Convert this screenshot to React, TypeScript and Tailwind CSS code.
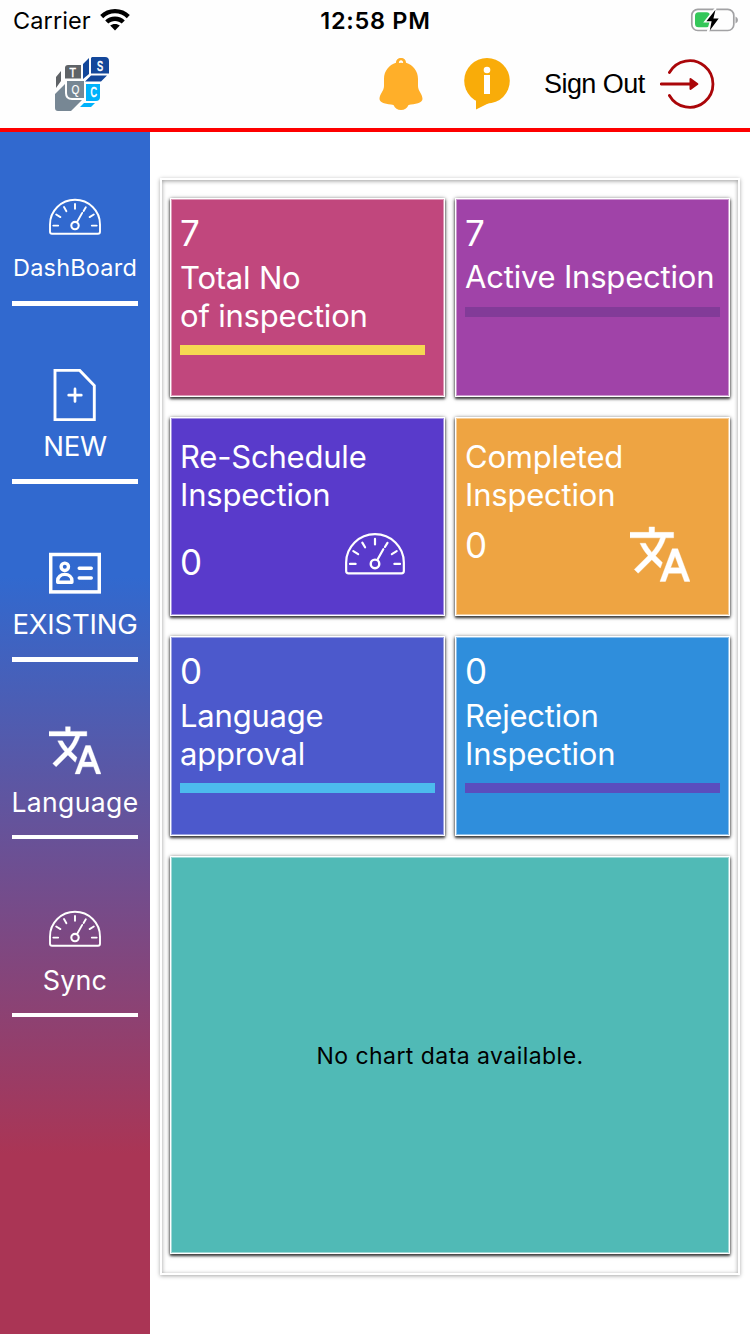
import React from "react";

type P = { className?: string };

function Gauge({ className }: P) {
  return (
    <svg viewBox="0 0 52 52" className={className} fill="none" stroke="white" strokeWidth="1.9" strokeLinecap="round">
      <path d="M1 40.8V33.4A25 24.6 0 0 1 51 33.4V40.8Q51 42.8 49 42.8H3Q1 42.8 1 40.8Z" />
      <path d="M4.3 34.6H9.2M42.8 34.6H47.7M7.2 23.5L11.4 26.1M44.8 23.5L40.6 26.1M15 16.1L17.4 20.2M26 12.9V17.7M36.8 16.3L34.6 19.9M33.2 21.9L28.2 30.7" />
      <circle cx="26" cy="34.6" r="3.7" strokeWidth="2.1" />
    </svg>
  );
}

function NewFile({ className }: P) {
  return (
    <svg viewBox="0 0 52 52" className={className} fill="none" stroke="white" strokeWidth="2.9">
      <path d="M6 1.4H30.7L45.3 16.6V50.6H6Z" />
      <path d="M26 19.9V32.5M19.7 26.2H32.3" strokeWidth="2.7" strokeLinecap="round" />
    </svg>
  );
}

function IdCard({ className }: P) {
  return (
    <svg viewBox="0 0 52 52" className={className} fill="none" stroke="white" strokeWidth="3.4">
      <rect x="1.7" y="7.5" width="48.6" height="37.4" strokeWidth="3.5" />
      <circle cx="15.8" cy="19.8" r="3.7" />
      <path d="M8.7 35.3V33.6C8.7 30 11.5 27.4 15.8 27.4S22.9 30 22.9 33.6V35.3Z" strokeLinejoin="round" />
      <path d="M30.2 21.2H42.3M30.2 31H42.3" strokeLinecap="round" />
    </svg>
  );
}

function Translate({ className }: P) {
  return (
    <svg viewBox="1 1.3 22 22" className={className} fill="white" stroke="white" strokeWidth="0.15">
      <path d="M12.87 15.07l-2.54-2.51.03-.03c1.74-1.94 2.98-4.17 3.71-6.53H17V4h-7V2H8v2H1v1.99h11.17C11.5 7.92 10.44 9.75 9 11.35 8.07 10.32 7.3 9.19 6.69 8h-2c.73 1.63 1.73 3.17 2.98 4.56l-5.09 5.02L4 19l5-5 3.11 3.11.76-2.04zM18.5 10h-2L12 22h2l1.12-3h4.75L21 22h2l-4.5-12zm-2.62 7l1.62-4.33L19.12 17h-3.24z" />
    </svg>
  );
}

function Logo() {
  return (
    <svg viewBox="0 0 56 56" className="mt-px h-14 w-14 overflow-visible" fontFamily="Liberation Sans, sans-serif" fill="white" fontWeight="400" stroke="white" textAnchor="middle">
      <g stroke="none">
        <path fill="#5f6367" d="M2 20L7 14V24L2 31ZM14 8H27V21.5H11V11Q11 8 14 8Z" />
        <path fill="#13479a" d="M29 7L35 1V17L29 22ZM38 0H51Q55 0 55 4V16.5H37V1ZM37 18.5H53L47 24.5H31Z" />
        <path fill="#778794" d="M1 37L11 27V36Q11 43 18 43H28L17 54H4Q1 54 1 51ZM13 24H30V41H18Q13 41 13 36Z" />
        <path fill="#00b2fb" d="M32 27H46V40Q46 44 42 44H32ZM30 46H41L37 50H26Z" />
      </g>
      <text transform="translate(18.7 19.7) scale(.78 1)" fontSize="13.5" strokeWidth=".5">T</text>
      <text transform="translate(46 14) scale(.65 1)" fontSize="14" strokeWidth=".7">S</text>
      <text transform="translate(21.4 36.6) scale(.75 1)" fontSize="13.5" strokeWidth=".2">Q</text>
      <text transform="translate(39.7 40.4) scale(.62 1)" fontSize="14.5" strokeWidth=".6">C</text>
    </svg>
  );
}

function StatusBar() {
  return (
    <div className="grid h-10 grid-cols-3 items-center pl-[13px] pr-3 text-[23.5px] leading-none text-black">
      <div className="flex items-center gap-[9px] pt-px">
        <span className="tracking-[0.1px]">Carrier</span>
        <svg viewBox="0 0 30 22" className="-mt-px h-[22px] w-[30px]" fill="black">
          <path d="M15 0C21 0 26 2.3 29.8 6L26.8 9.2C23.5 6 19.5 4.3 15 4.3S6.5 6 3.2 9.2L.2 6C4 2.3 9 0 15 0Z" />
          <path d="M15 7.6C19 7.6 22.3 9.1 24.8 11.4L21.7 14.5C19.9 12.8 17.6 11.9 15 11.9S10.1 12.8 8.3 14.5L5.2 11.4C7.7 9.1 11 7.6 15 7.6Z" />
          <path d="M15 15C17 15 18.6 15.6 19.8 16.6L15 21.6L10.2 16.6C11.4 15.6 13 15 15 15Z" />
        </svg>
      </div>
      <span className="justify-self-center whitespace-nowrap pt-0.5 font-semibold tracking-[0.7px]">12:58 PM</span>
      <svg viewBox="0 0 48 24" className="h-6 w-12 justify-self-end">
        <rect x="1.8" y="1.3" width="42" height="21.2" rx="6" fill="none" stroke="#a2a2a4" strokeWidth="1.7" />
        <path d="M45.5 8.5Q48 9.5 48 12T45.5 15.5Z" fill="#a2a2a4" />
        <rect x="5" y="4.3" width="15" height="15" rx="3.5" fill="#34c759" />
        <path d="M25.6 0L14.8 13.7H20.4L17.5 24L30.2 9.5H24.8Z" fill="white" stroke="white" strokeWidth="1.5" />
        <path d="M25.5 1.8L16.4 13.3H21.6L19.8 22.5L28.7 10.5H23.4Z" fill="black" />
      </svg>
    </div>
  );
}

function Header() {
  return (
    <header className="h-[132px] border-b-4 border-[#fe0000] bg-[#fefefe]">
      <StatusBar />
      <div className="flex items-start pl-[54px] pt-4">
        <Logo />
        <svg viewBox="0 0 44 54" className="ml-[269px] mt-px h-[54px] w-11" fill="#ffaf29">
          <path fillRule="evenodd" d="M22 1C25 1 27 3 27 5.8C34 8 39 14 39 22V29C39 34 43.5 37 43.5 42C43.5 46 36 47 29.5 48C28 51.5 25.5 53 22 53S16 51.5 14.5 48C8 47 .5 46 .5 42C.5 37 5 34 5 29V22C5 14 10 8 17 5.8C17 3 19 1 22 1ZM22 3.2A2.3 2.2 0 0 0 20 6.1Q22 5.6 24 6.1A2.3 2.2 0 0 0 22 3.2Z" />
        </svg>
        <svg viewBox="0 0 46 54" className="ml-[41px] mt-px h-[54px] w-[46px]">
          <circle cx="23" cy="23.8" r="22.8" fill="#f9ac09" />
          <path fill="#f9ac09" d="M12 42V52.6L25 46Z" />
          <circle cx="23" cy="13" r="3.3" fill="white" />
          <path d="M20 18H26V37H20Z" fill="white" />
        </svg>
        <span className="ml-[34px] mt-3.5 w-[101px] whitespace-nowrap font-['Liberation_Sans',sans-serif] text-[27px] leading-[28px] tracking-[-0.55px] text-black">Sign Out</span>
        <svg viewBox="0 0 56 52" className="ml-[15px] mt-0.5 h-[52px] w-14" fill="none" stroke="#aa0609" strokeWidth="2.8" strokeLinecap="round">
          <path d="M9.4 14.5A23.3 23.3 0 1 1 9.4 37.5M1.3 26H32" />
          <path d="M30.5 21.1L37.4 26L30.5 30.9Z" fill="#aa0609" strokeWidth="2" strokeLinejoin="round" />
        </svg>
      </div>
    </header>
  );
}

function NavItem({ icon, label, text, bar = "h-[5px]" }: { icon: React.ReactNode; label: string; text: string; bar?: string }) {
  return (
    <div className="flex h-[178px] flex-col items-center pt-[63px]">
      {icon}
      <span className={`mt-[7px] flex h-9 items-center whitespace-nowrap leading-none ${text}`}>{label}</span>
      <div className={`mt-[15px] w-[126px] bg-white ${bar}`} />
    </div>
  );
}

function Sidebar() {
  const s = "h-[52px] w-[52px] shrink-0";
  return (
    <nav className="w-[150px] shrink-0 bg-linear-to-b/srgb from-[#3169cf] from-[37%] to-[#aa3555] to-[85%] text-white">
      <div className="-mt-1">
        <NavItem icon={<Gauge className={s} />} label="DashBoard" text="text-[23.5px] tracking-[0.2px]" />
        <NavItem icon={<NewFile className={s} />} label="NEW" text="pt-0.5 text-[27.5px] tracking-[-0.2px]" />
        <NavItem icon={<IdCard className={s} />} label="EXISTING" text="pt-0.5 text-[27.5px] tracking-[-0.2px]" />
        <NavItem icon={<Translate className={s} />} label="Language" text="text-[26.5px] tracking-[0.4px]" bar="h-1" />
        <NavItem icon={<Gauge className={s} />} label="Sync" text="text-[27px] tracking-[0.1px]" bar="h-1" />
      </div>
    </nav>
  );
}

const cardFrame = "border border-white shadow-[0_1px_4px_rgba(0,0,0,0.75),0_2px_2px_rgba(0,0,0,0.5),inset_0_0_0_1px_rgba(255,255,255,0.45)]";

function Count({ value, className }: { value: string; className?: string }) {
  return <div className={`text-[35px] leading-[38px] tracking-[-0.5px] ${className ?? ""}`}>{value}</div>;
}

function Label({ children, className }: { children: React.ReactNode; className: string }) {
  return <p className={`whitespace-nowrap tracking-[-0.2px] ${className}`}>{children}</p>;
}

function Card({ bg, children }: { bg: string; children: React.ReactNode }) {
  return <section className={`px-[9px] text-[31px] leading-[38px] text-white ${cardFrame} ${bg}`}>{children}</section>;
}

export default function App() {
  return (
    <div className="flex h-[1334px] w-[750px] flex-col overflow-hidden bg-white font-['Inter',sans-serif]">
      <Header />
      <div className="flex flex-1">
        <Sidebar />
        <main className="flex-1 px-2.5 pt-[46px]">
          <div className="h-[1097px] border-2 border-white px-2 pt-[18px] shadow-[0_1px_4px_rgba(0,0,0,0.35),inset_0_1px_4px_rgba(0,0,0,0.4)]">
            <div className="grid grid-cols-2 grid-rows-[199px_199px_200px_398px] gap-x-2.5 gap-y-5">
              <Card bg="bg-[#c1477d]">
                <Count value="7" className="pt-[15px]" />
                <Label className="mt-[7px]">Total No<br />of inspection</Label>
                <div className="mt-[10px] h-2.5 w-[245px] bg-[#f5d852]" />
              </Card>
              <Card bg="bg-[#a043a8]">
                <Count value="7" className="pt-[15px]" />
                <Label className="mt-[6px]">Active Inspection</Label>
                <div className="mt-[11px] h-2.5 bg-[#823b98]" />
              </Card>
              <Card bg="bg-[#593acb]">
                <Label className="pt-5">Re-Schedule<br />Inspection</Label>
                <div className="flex justify-between pr-[30px]">
                  <Count value="0" className="mt-[29px]" />
                  <Gauge className="mt-[10px] h-[60px] w-[60px]" />
                </div>
              </Card>
              <Card bg="bg-[#eea442]">
                <Label className="pt-5">Completed<br />Inspection</Label>
                <div className="flex justify-between pr-[30px]">
                  <Count value="0" className="mt-[12px]" />
                  <Translate className="mt-[11px] h-[60px] w-[60px]" />
                </div>
              </Card>
              <Card bg="bg-[#4c59cc]">
                <Count value="0" className="pt-[15px]" />
                <Label className="mt-[7px]">Language<br />approval</Label>
                <div className="mt-[10px] h-2.5 bg-[#4cbbed]" />
              </Card>
              <Card bg="bg-[#2f8edc]">
                <Count value="0" className="pt-[15px]" />
                <Label className="mt-[7px]">Rejection<br />Inspection</Label>
                <div className="mt-[10px] h-2.5 bg-[#5a4dbe]" />
              </Card>
              <section className={`col-span-2 flex items-center justify-center bg-[#50bab6] pt-[2px] text-[23px] tracking-[0.45px] text-black ${cardFrame}`}>
                No chart data available.
              </section>
            </div>
          </div>
        </main>
      </div>
    </div>
  );
}
